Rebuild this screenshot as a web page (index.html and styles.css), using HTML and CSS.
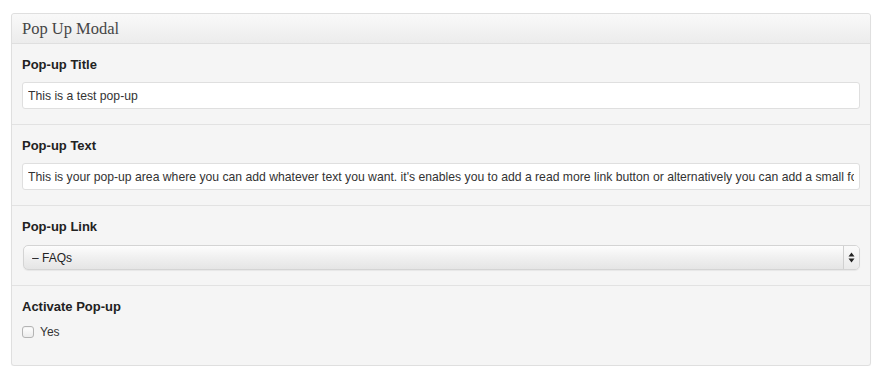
FILE: index.html
```html
<!DOCTYPE html>
<html>
<head>
<meta charset="utf-8">
<link rel="stylesheet" href="styles.css">
</head>
<body>
<div class="postbox">
  <h3 class="hndle">Pop Up Modal</h3>
  <div class="inside">
    <div class="field">
      <label class="field-label" for="pt">Pop-up Title</label>
      <input class="text-input" id="pt" type="text" value="This is a test pop-up">
    </div>
    <div class="field">
      <label class="field-label" for="ptx">Pop-up Text</label>
      <input class="text-input" id="ptx" type="text" value="This is your pop-up area where you can add whatever text you want. it's enables you to add a read more link button or alternatively you can add a small form">
    </div>
    <div class="field">
      <label class="field-label" for="pl">Pop-up Link</label>
      <div class="select-wrap">
        <select class="select" id="pl"><option>– FAQs</option></select>
        <span class="select-arrows">
          <svg width="7" height="11" viewBox="0 0 7 11"><path d="M3.5 0.5 L6.5 4.5 L0.5 4.5 Z M3.5 10.5 L6.5 6.5 L0.5 6.5 Z" fill="#222"/></svg>
        </span>
      </div>
    </div>
    <div class="field last">
      <span class="field-label">Activate Pop-up</span>
      <label class="check-row"><input class="checkbox" type="checkbox"> Yes</label>
    </div>
  </div>
</div>
</body>
</html>
```
FILE: styles.css
```css
html, body {
  margin: 0;
  padding: 0;
  background: #ffffff;
}
body {
  padding: 13px 14px 0 11px;
  font-family: "Liberation Sans", Arial, sans-serif;
  color: #333;
}
.postbox {
  border: 1px solid #dfdfdf;
  border-radius: 3px;
  background: #f5f5f5;
  box-shadow: 0 1px 1px rgba(0,0,0,0.04);
}
.hndle {
  margin: 0;
  height: 29px;
  padding: 0 10px;
  font-family: "Liberation Serif", Georgia, serif;
  font-weight: normal;
  font-size: 16.5px;
  line-height: 30px;
  color: #464646;
  background: linear-gradient(to bottom, #f9f9f9, #ececec);
  border-bottom: 1px solid #dfdfdf;
  border-radius: 3px 3px 0 0;
}
.inside {
  display: flex;
  flex-direction: column;
}
.field {
  display: flex;
  flex-direction: column;
  padding: 13px 10px 15px 10px;
  border-bottom: 1px solid #e2e2e2;
}
.field.last {
  border-bottom: none;
  padding-bottom: 25px;
}
.field-label {
  font-weight: bold;
  font-size: 13px;
  line-height: 16px;
  color: #222;
  margin-bottom: 9px;
}
.text-input {
  box-sizing: border-box;
  height: 27px;
  width: 100%;
  margin: 0;
  padding: 0 5px;
  border: 1px solid #dfdfdf;
  border-radius: 3px;
  background: #fff;
  font-family: "Liberation Sans", Arial, sans-serif;
  font-size: 12.2px;
  color: #333;
  outline: none;
}
.select-wrap {
  box-sizing: border-box;
  display: flex;
  align-items: stretch;
  height: 25px;
  margin-top: 1px;
  margin-left: 1px;
  border: 1px solid #d4d4d4;
  border-radius: 5px;
  background: linear-gradient(to bottom, #fdfdfd 0%, #f0f0f0 50%, #e5e5e5 100%);
  box-shadow: 0 1px 1px rgba(0,0,0,0.06);
}
.select {
  flex: 1;
  -webkit-appearance: none;
  appearance: none;
  border: none;
  background: transparent;
  margin: 0;
  padding: 0 0 0 8px;
  font-family: "Liberation Sans", Arial, sans-serif;
  font-size: 12px;
  color: #222;
  outline: none;
}
.select-arrows {
  display: flex;
  align-items: center;
  justify-content: center;
  width: 15px;
  border-left: 1px solid #d0d0d0;
  background: linear-gradient(to bottom, #fafafa, #eaeaea);
  border-radius: 0 4px 4px 0;
}
.check-row {
  display: flex;
  align-items: center;
  gap: 6px;
  font-size: 12px;
  line-height: 16px;
  color: #333;
}
.checkbox {
  -webkit-appearance: none;
  appearance: none;
  box-sizing: border-box;
  width: 12px;
  height: 12px;
  margin: 0;
  border: 1px solid #b4b4b4;
  border-radius: 3px;
  background: linear-gradient(to bottom, #ffffff, #ececec);
  box-shadow: inset 0 1px 1px rgba(0,0,0,0.05);
}
```
